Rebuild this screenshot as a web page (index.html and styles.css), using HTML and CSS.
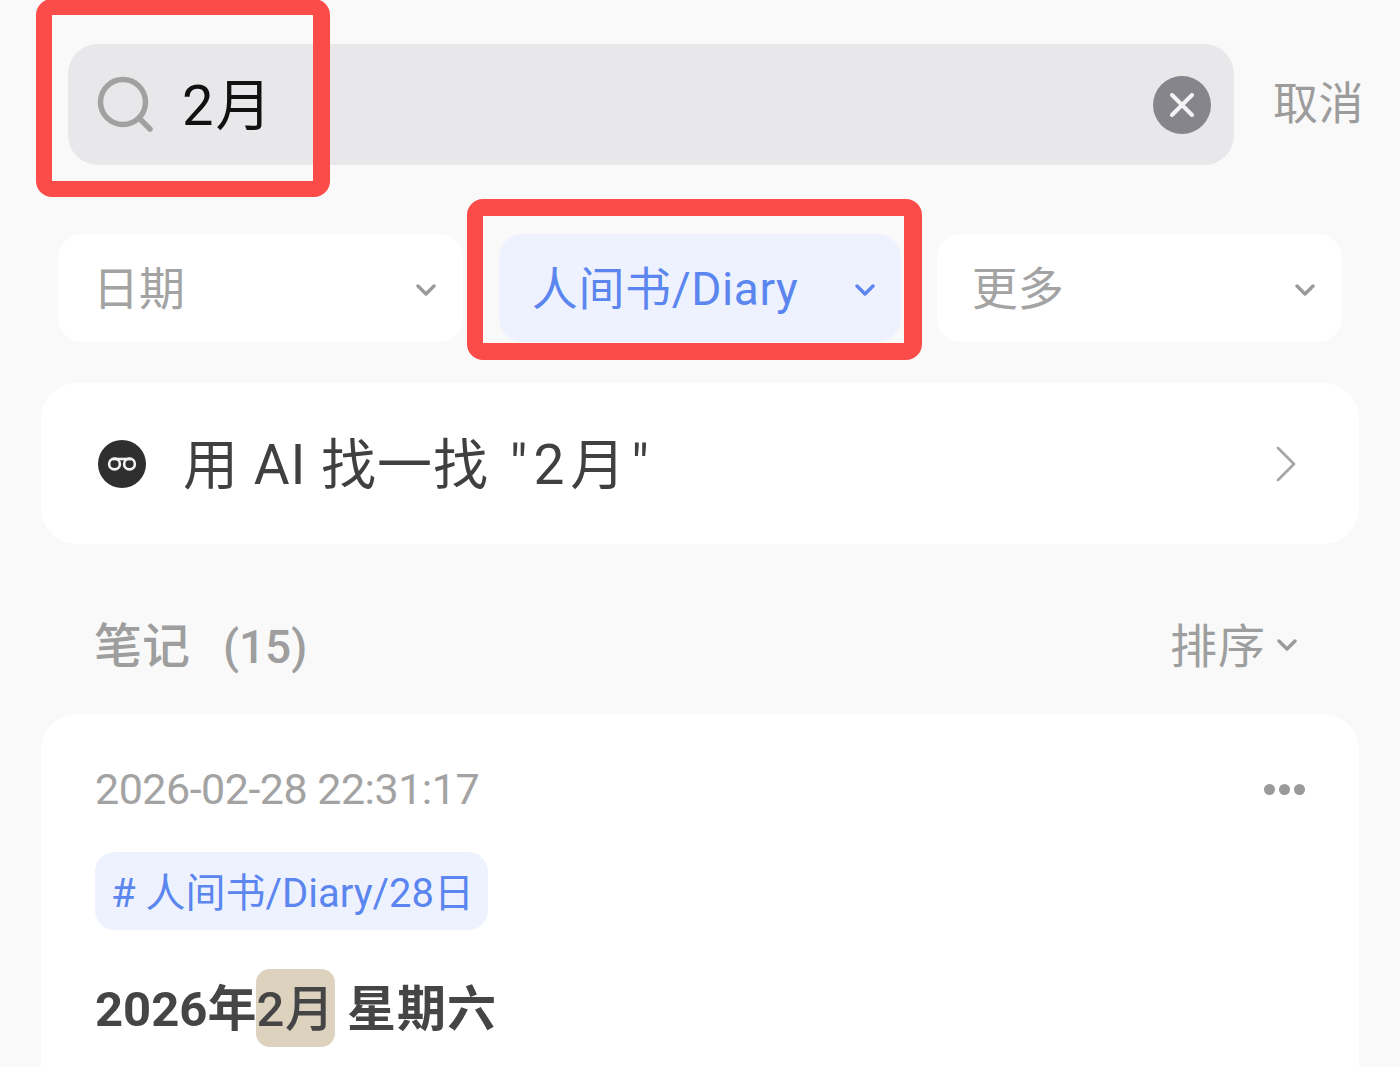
FILE: index.html
```html
<!DOCTYPE html>
<html lang="zh-CN">
<head>
  <meta charset="UTF-8">
  <meta name="viewport" content="width=device-width, initial-scale=1.0">
  <title>搜索</title>
  <link rel="stylesheet" href="styles.css">
</head>
<body>
  <div class="page">
    <div class="search-row">
      <div class="search-box">
        <svg class="search-icon" viewBox="0 0 58 58" width="58" height="58"><circle cx="26" cy="26" r="22.5" fill="none" stroke="#a1a1a1" stroke-width="5.5"/><path d="M43 43L53 53" stroke="#a1a1a1" stroke-width="5.5" stroke-linecap="round"/></svg>
        <span class="search-text">2月</span>
        <span class="clear-btn">
          <svg viewBox="0 0 24 24" width="24" height="24"><path d="M2 2L22 22M22 2L2 22" stroke="#f4f4f5" stroke-width="4" stroke-linecap="round"/></svg>
        </span>
      </div>
      <span class="cancel">取消</span>
    </div>

    <div class="filters">
      <div class="chip">
        <span class="chip-label">日期</span>
        <svg class="chevron" viewBox="0 0 20 12" width="20" height="12"><path d="M2 2L10 10L18 2" fill="none" stroke="#9a9a9a" stroke-width="3.4" stroke-linecap="round" stroke-linejoin="round"/></svg>
      </div>
      <div class="chip chip-active">
        <span class="chip-label">人间书/Diary</span>
        <svg class="chevron" viewBox="0 0 20 12" width="20" height="12"><path d="M2 2L10 10L18 2" fill="none" stroke="#5b86ef" stroke-width="3.4" stroke-linecap="round" stroke-linejoin="round"/></svg>
      </div>
      <div class="chip">
        <span class="chip-label">更多</span>
        <svg class="chevron" viewBox="0 0 20 12" width="20" height="12"><path d="M2 2L10 10L18 2" fill="none" stroke="#9a9a9a" stroke-width="3.4" stroke-linecap="round" stroke-linejoin="round"/></svg>
      </div>
    </div>

    <div class="ai-card">
      <svg class="ai-icon" viewBox="0 0 48 48" width="48" height="48"><circle cx="24" cy="24" r="24" fill="#2f2f2f"/><path d="M15 19H33" stroke="#f4f4f4" stroke-width="2.6"/><circle cx="16.5" cy="24" r="5.4" fill="none" stroke="#f4f4f4" stroke-width="2.6"/><circle cx="31.5" cy="24" r="5.4" fill="none" stroke="#f4f4f4" stroke-width="2.6"/></svg>
      <span class="ai-text">用 AI 找一找 <span class="ai-query">"2月"</span></span>
      <svg class="ai-arrow" viewBox="0 0 20 36" width="20" height="36"><path d="M2 2L18 18L2 34" fill="none" stroke="#a6a6a6" stroke-width="2.8" stroke-linecap="round" stroke-linejoin="round"/></svg>
    </div>

    <div class="section-head">
      <span class="section-title">笔记<span class="section-count">(15)</span></span>
      <span class="sort">排序
        <svg viewBox="0 0 20 12" width="20" height="12"><path d="M2 2L10 10L18 2" fill="none" stroke="#9a9a9a" stroke-width="3.4" stroke-linecap="round" stroke-linejoin="round"/></svg>
      </span>
    </div>

    <div class="note-card">
      <div class="note-top">
        <span class="note-date">2026-02-28 22:31:17</span>
        <span class="note-more"><i></i><i></i><i></i></span>
      </div>
      <span class="tag"># 人间书/Diary/28日</span>
      <div class="note-title">2026年<mark>2月</mark> <span class="note-week">星期六</span></div>
    </div>

    <div class="mark-box mark-search"></div>
    <div class="mark-box mark-filter"></div>
  </div>
</body>
</html>
```

FILE: styles.css
```css
html, body {
  margin: 0;
  padding: 0;
  height: 100%;
  overflow: hidden;
}
body {
  background-color: #f9f9f9;
  font-family: Roboto, "Noto Sans CJK SC", sans-serif;
}
.page {
  position: relative;
  height: 1067px;
  overflow: hidden;
  padding: 44px 41px 0;
  box-sizing: border-box;
}
.search-row {
  display: flex;
  align-items: center;
  padding-left: 27px;
}
.search-box {
  flex: none;
  width: 1166px;
  height: 121px;
  background-color: #e8e8ea;
  border-radius: 30px;
  display: flex;
  align-items: center;
  padding: 0 23px 0 29px;
  box-sizing: border-box;
}
.search-icon {
  flex: none;
}
.search-text {
  margin-left: 27px;
  padding-bottom: 8px;
  font-size: 56px;
  letter-spacing: 2px;
  color: #111111;
  flex: 1;
}
.clear-btn {
  width: 58px;
  height: 58px;
  border-radius: 50%;
  background-color: #85858b;
  display: flex;
  align-items: center;
  justify-content: center;
}
.cancel {
  margin-left: 39px;
  padding-bottom: 8px;
  font-size: 45px;
  letter-spacing: 0.5px;
  color: #9c9c9c;
  white-space: nowrap;
}
.filters {
  display: flex;
  gap: 35.5px;
  margin: 69px 17px 0;
}
.chip {
  flex: 1;
  height: 108px;
  background-color: #ffffff;
  border-radius: 24px;
  display: flex;
  align-items: center;
  justify-content: space-between;
  padding: 0 27px 0 35px;
  box-sizing: border-box;
  font-size: 46px;
  color: #a3a3a3;
}
.chip-label {
  padding-bottom: 6px;
}
.chevron {
  margin-top: 3px;
}
.chip-active {
  background-color: #eef2fe;
  color: #5b86ef;
  padding-left: 33px;
  padding-right: 26px;
}
.chip-active .chip-label {
  letter-spacing: 0.6px;
}
.ai-card {
  margin-top: 41px;
  height: 161px;
  background-color: #ffffff;
  border-radius: 36px;
  display: flex;
  align-items: center;
  padding: 0 63px 0 57px;
}
.ai-text {
  margin-left: 37px;
  padding-bottom: 8px;
  font-size: 55px;
  letter-spacing: 1px;
  color: #404040;
  flex: 1;
}
.ai-query {
  margin-left: 6px;
  letter-spacing: 6px;
}
.section-head {
  height: 170px;
  display: flex;
  align-items: center;
  justify-content: space-between;
  padding: 26px 62px 0 53px;
  box-sizing: border-box;
}
.section-title {
  font-size: 48px;
  font-weight: 500;
  color: #9e9e9e;
}
.section-count {
  margin-left: 33px;
  font-size: 46px;
}
.sort {
  font-size: 47px;
  letter-spacing: 1px;
  color: #9e9e9e;
  display: flex;
  align-items: center;
  gap: 11px;
}
.sort svg {
  margin-top: 5px;
}
.note-card {
  height: 400px;
  background-color: #ffffff;
  border-radius: 36px;
  padding: 44px 54px 0;
}
.note-top {
  display: flex;
  align-items: center;
  justify-content: space-between;
}
.note-date {
  font-size: 43px;
  letter-spacing: -0.5px;
  color: #a3a3a3;
  line-height: 62px;
}
.note-more {
  display: flex;
  gap: 4px;
}
.note-more i {
  width: 11px;
  height: 11px;
  border-radius: 50%;
  background-color: #9a9a9a;
}
.tag {
  display: inline-block;
  margin-top: 32px;
  height: 78px;
  line-height: 83px;
  padding: 0 14px 0 16px;
  background-color: #eef2fe;
  border-radius: 20px;
  font-size: 40px;
  color: #5b86ef;
}
.note-title {
  margin-top: 39px;
  font-size: 49px;
  font-weight: 700;
  color: #454545;
  line-height: 78px;
}
.note-title mark {
  background-color: #ddd2bd;
  color: #454545;
  font-weight: 500;
  letter-spacing: 0.8px;
  border-radius: 14px;
  display: inline-block;
  line-height: 74px;
  padding-top: 4px;
}
.note-week {
  letter-spacing: 1px;
}
.mark-box {
  position: absolute;
  border: 16px solid #fb4c4a;
  border-radius: 16px;
  box-sizing: border-box;
}
.mark-search {
  left: 36px;
  top: -1px;
  width: 294px;
  height: 198px;
  border-right-width: 17px;
}
.mark-filter {
  left: 467px;
  top: 199px;
  width: 455px;
  height: 161px;
  border-width: 17px 18px 17px 16px;
}
```
